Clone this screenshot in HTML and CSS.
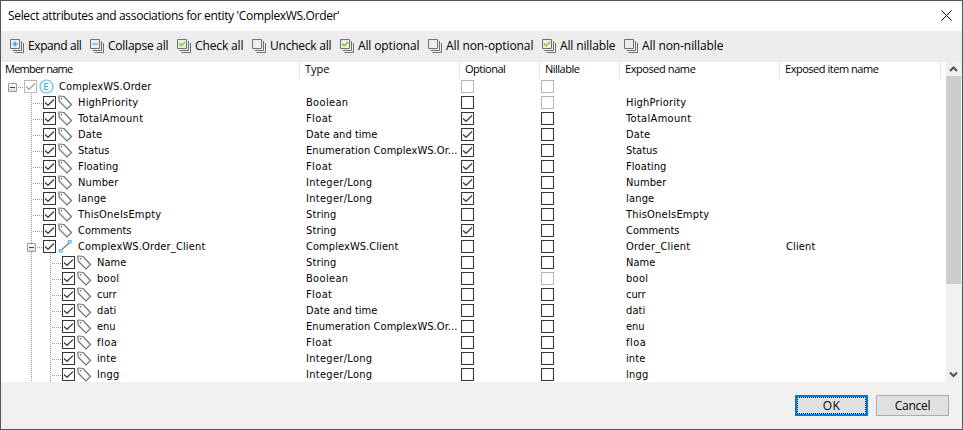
FILE: index.html
```
<!DOCTYPE html>
<html lang="en">
<head>
<meta charset="utf-8">
<title>Select attributes and associations</title>
<link rel="stylesheet" href="styles.css">
</head>
<body>
<svg class="defs" aria-hidden="true">
  <symbol id="stack" viewBox="0 0 15 15"><path d="M.5 .5h9v9h-9zM11.500 2v9.500H2.500M13.500 4v9.500H4.500" fill="none" stroke="#707070"/></symbol>
  <symbol id="tag" viewBox="0 0 15 15"><path d="M.8 1.500Q.8 1 1.500 1L6 1.500 13.500 9.500 9 14 1.200 6.300Z" fill="none" stroke="#707070" stroke-width="1.200"/><circle cx="3.500" cy="3.700" r=".8" fill="#555"/></symbol>
  <symbol id="entity" viewBox="0 0 15 15"><circle cx="7.500" cy="7.500" r="6.500" fill="#fff" stroke="#65baf0" stroke-width="1.200"/><path d="M9.500 4.500H5.800v6h3.700M5.800 7.500h3.300" fill="none" stroke="#46aee8" stroke-width="1.200"/></symbol>
  <symbol id="assoc" viewBox="0 0 15 15"><path d="M3.500 11 11 4" stroke="#777" stroke-width="1.200"/><path d="M1.500 10.500h2.500v2.500H1.500zM10.500 1.500H13V4h-2.500z" fill="#fff" stroke="#4db1ea" stroke-width="1.200"/></symbol>
  <symbol id="tick" viewBox="0 0 11 11"><path d="M1 5.500 4 8.300 10 2.500" fill="none" stroke="currentColor" stroke-width="1.300"/></symbol>
</svg>
<main class="window">
  <header class="titlebar">
    <span class="title" data-w="331">Select attributes and associations for entity 'ComplexWS.Order'</span>
    <svg class="close" viewBox="0 0 11 11"><path d="M.5 .5l10 10M10.500 .5l-10 10" stroke="#111"/></svg>
  </header>
  <nav class="toolbar" id="toolbar"></nav>
  <section class="list">
    <div class="grid">
      <div class="row head">
        <span class="cell" data-w="67">Member name</span><span class="cell" data-w="24">Type</span><span class="cell" data-w="40">Optional</span><span class="cell" data-w="34">Nillable</span><span class="cell" data-w="70">Exposed name</span><span class="cell" data-w="93">Exposed item name</span>
      </div>
      <div id="rows"></div>
    </div>
    <div class="scroll">
      <svg class="arrow" viewBox="0 0 15 14"><path d="M4 9 7.500 5.500 11 9" fill="none" stroke="#505050" stroke-width="2"/></svg>
      <div class="thumb"></div>
      <svg class="arrow down" viewBox="0 0 15 14"><path d="M4 4.500 7.500 8 11 4.500" fill="none" stroke="#505050" stroke-width="2"/></svg>
    </div>
  </section>
  <footer class="footer">
    <button class="btn primary"><span data-w="17">OK</span></button>
    <button class="btn"><span data-w="35">Cancel</span></button>
  </footer>
</main>
<script src="app.js"></script>
</body>
</html>
```
FILE: styles.css
```
* { box-sizing: border-box; }
body { margin: 0; }
svg { display: block; flex: none; }
.defs { display: none; }
.window {
  width: 963px; height: 430px; border: 1px solid #555; background: #fff; color: #000;
  display: flex; flex-direction: column; overflow: hidden;
  font: 12px/16px "Open Sans", "Noto Sans", sans-serif; white-space: nowrap;
}
.titlebar { height: 30px; flex: none; display: flex; align-items: center; justify-content: space-between; padding: 0 10px 2px 7px; }
.title { padding-top: 2px; }
.close { width: 11px; height: 11px; }
.toolbar { height: 31px; flex: none; display: flex; align-items: center; background: #ededed; padding-left: 9px; }
.tool { display: flex; align-items: center; gap: 3px; flex: none; }
.tool span { padding-bottom: 1px; }
.tool-icon { width: 15px; height: 15px; }
.list { height: 320px; flex: none; display: flex; justify-content: space-between; overflow: hidden; }
.grid { width: 940px; font: 11px/18px "DejaVu Sans Condensed", "DejaVu Sans", sans-serif; font-stretch: condensed; }
.row { display: grid; grid-template-columns: 299px 160px 80px 80px 160px 161px; height: 16px; }
.row > * { min-width: 0; height: 16px; padding-left: 6px; }
.head { font: 11px/14px "Open Sans", sans-serif; }
.head .cell { border-right: 1px solid #e3e3e3; padding-left: 5px; }
.head .cell:first-child { padding-left: 4px; }
.row > .member { display: flex; align-items: center; padding-left: 7px; }
.member > span { padding-top: 2px; }
.row > .mark { padding: 2px 0 0 1px; }
.check { width: 13px; height: 13px; border: 1px solid #333; color: #444; background: #fff; flex: none; }
.check.dim { border-color: #b5b5b5; color: #a5a5a5; }
.check svg { width: 11px; height: 11px; }
.member .check { margin-top: 1px; }
.icon { width: 15px; height: 15px; margin: 0 5px 0 2px; }
.guide { width: 19px; height: 16px; flex: none; background: repeating-linear-gradient(to bottom, #999 0 1px, transparent 1px 2px) 4px 0 / 1px 16px no-repeat; }
.guide.empty { background: none; }
.branch { width: 16px; height: 16px; flex: none;
  background:
    repeating-linear-gradient(to bottom, #999 0 1px, transparent 1px 2px) 4px 0 / 1px 16px no-repeat,
    repeating-linear-gradient(to right, #999 0 1px, transparent 1px 2px) 6px 9px / 10px 1px no-repeat; }
.branch.root { background-size: 0 0, 10px 1px; }
.branch.open { display: flex; padding-top: 5px; }
.guide:nth-child(2) { background-position-x: 4px; }
.toggle { width: 9px; height: 9px; border: 1px solid #999; border-radius: 1px; background: linear-gradient(#39475f, #39475f) 1px 3px / 5px 1px no-repeat, linear-gradient(#fff, #ddd); }
.scroll { width: 16px; background: #f0f0f0; display: flex; flex-direction: column; }
.arrow { width: 15px; height: 14px; }
.thumb { height: 208px; width: 15px; background: #cdcdcd; }
.down { margin-top: auto; }
.footer { flex: 1; background: #f0f0f0; display: flex; justify-content: flex-end; align-items: flex-start; gap: 8px; padding: 13px 13px 0 0; }
.btn { width: 73px; height: 21px; padding: 0; border: 1px solid #adadad; background: #e1e1e1; color: #000; font: 12px/17px "Open Sans", sans-serif; }
.btn.primary { border: 2px solid #0078d7; outline: 1px dotted #111; outline-offset: -3px; line-height: 15px; }
```
FILE: app.js
```
const tools = [
  ["Expand all", 80, 53, "plus"], ["Collapse all", 87, 60, "minus"], ["Check all", 75, 48, "check"],
  ["Uncheck all", 88, 61, ""], ["All optional", 88, 61, "check"], ["All non-optional", 114, 87, ""],
  ["All nillable", 82, 55, "check"], ["All non-nillable", 108, 81, ""]
];
const marks = {
  plus: '<path d="M2.500 5h5M5 2.500v5" stroke="#38a7ed" stroke-width="1.500"/>',
  minus: '<path d="M2.500 5h5" stroke="#58b6f0" stroke-width="1.500"/>',
  check: '<path d="M2 4.500 4.300 6.800 8 3" fill="none" stroke="#82c91e" stroke-width="1.500"/>',
  "": ""
};
document.getElementById("toolbar").innerHTML = tools.map(([label, size, w, mark]) =>
  `<div class="tool" style="width:${size}px"><svg class="tool-icon" viewBox="0 0 15 15"><use href="#stack"/>${marks[mark]}</svg><span data-w="${w}">${label}</span></div>`).join("");

const widths = {
  "ComplexWS.Order": 92, HighPriority: 60, TotalAmount: 65, Date: 24, Status: 31, Floating: 40, Number: 40,
  lange: 28, ThisOneIsEmpty: 83, Comments: 53, "ComplexWS.Order_Client": 127, Order_Client: 64, Client: 29,
  Name: 29, bool: 22, curr: 19, dati: 19, enu: 18, floa: 20, inte: 19, lngg: 22, Boolean: 42, Float: 26,
  "Date and time": 71, "Enumeration ComplexWS.Or...": 151, "Integer/Long": 66, String: 30, "ComplexWS.Client": 92
};
const en = "Enumeration ComplexWS.Or...";
// level, member, type, optional, nillable available, exposed name, exposed item name
const rows = [
  [0, "ComplexWS.Order", "", 0, 0, ""],
  [1, "HighPriority", "Boolean", 0, 0], [1, "TotalAmount", "Float", 1, 1], [1, "Date", "Date and time", 1, 1],
  [1, "Status", en, 1, 1], [1, "Floating", "Float", 1, 1], [1, "Number", "Integer/Long", 1, 1],
  [1, "lange", "Integer/Long", 1, 1], [1, "ThisOneIsEmpty", "String", 0, 1], [1, "Comments", "String", 1, 1],
  [1, "ComplexWS.Order_Client", "ComplexWS.Client", 0, 1, "Order_Client", "Client"],
  [2, "Name", "String", 0, 1], [2, "bool", "Boolean", 0, 0], [2, "curr", "Float", 0, 1],
  [2, "dati", "Date and time", 0, 1], [2, "enu", en, 0, 1], [2, "floa", "Float", 0, 1],
  [2, "inte", "Integer/Long", 0, 1], [2, "lngg", "Integer/Long", 0, 1]
];
const text = t => t ? `<span data-w="${widths[t]}">${t}</span>` : "";
const box = (on, dim) => `<div class="check${dim ? " dim" : ""}">${on ? '<svg><use href="#tick"/></svg>' : ""}</div>`;
document.getElementById("rows").innerHTML = rows.map(([level, name, type, opt, nil, exposed = name, item = ""]) => {
  const root = level === 0, open = root || item !== "";
  const guides = level === 0 ? "" : '<i class="guide empty"></i>' + (level === 2 ? '<i class="guide"></i>' : "");
  const branch = `<i class="branch${root ? " root" : ""}${open ? " open" : ""}">${open ? '<b class="toggle"></b>' : ""}</i>`;
  const icon = root ? "entity" : open ? "assoc" : "tag";
  return `<div class="row"><div class="member">${guides}${branch}${box(true, root)}<svg class="icon"><use href="#${icon}"/></svg>${text(name)}</div>
    <div>${text(type)}</div><div class="mark">${box(opt, root)}</div><div class="mark">${box(false, !nil)}</div><div>${text(exposed)}</div><div>${text(item)}</div></div>`;
}).join("");

document.querySelectorAll("[data-w]").forEach(el => {
  const range = document.createRange();
  range.selectNodeContents(el);
  const natural = range.getBoundingClientRect().width;
  el.style.letterSpacing = (Number(el.dataset.w) + 0.4 - natural) / el.textContent.length + "px";
});
```
